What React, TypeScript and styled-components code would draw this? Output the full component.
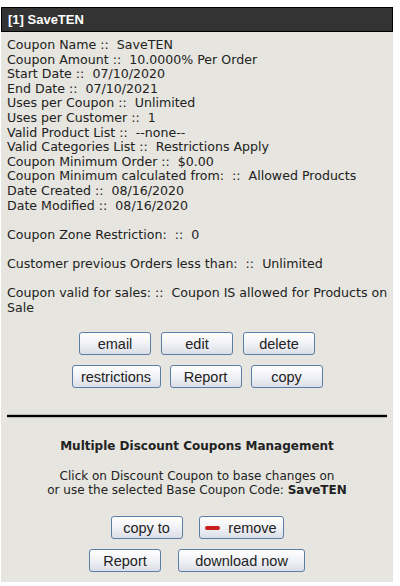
import React from "react";
import styled, { createGlobalStyle } from "styled-components";

const Global = createGlobalStyle`
  html, body { margin: 0; padding: 0; background: #ffffff; }
  body { font-family: "DejaVu Sans", Verdana, sans-serif; }
`;

const Panel = styled.div`
  margin: 7px 0 0 1px;
  width: 392px;
  background: #e6e5df;
  padding-bottom: 10px;
  box-sizing: border-box;
`;

const Header = styled.div`
  height: 25px;
  box-sizing: border-box;
  background: #333333;
  border: 1px solid #000;
  color: #fff;
  font-family: "Liberation Sans", Arial, sans-serif;
  font-weight: bold;
  font-size: 13px;
  display: flex;
  align-items: center;
  padding-left: 6px;
`;

const Info = styled.div`
  padding: 6px 2px 0 6px;
  font-size: 12.6px;
  line-height: 14.6px;
  color: #222;
`;

const Line = styled.div<{ $gap?: boolean }>`
  margin-top: ${(p) => (p.$gap ? "14.6px" : "0")};
`;

const ButtonRows = styled.div<{ $top: number }>`
  display: flex;
  flex-direction: column;
  align-items: center;
  gap: 10px;
  margin-top: ${(p) => p.$top}px;
`;

const Row = styled.div<{ $gap: number; $shift?: number }>`
  display: flex;
  gap: ${(p) => p.$gap}px;
  margin-left: ${(p) => p.$shift ?? 0}px;
`;

const Btn = styled.button<{ $w: number }>`
  width: ${(p) => p.$w}px;
  height: 23px;
  padding: 0 4px;
  box-sizing: border-box;
  border: 1px solid #5b7ea6;
  border-radius: 3px;
  background: linear-gradient(#ffffff 0%, #f1f2f6 50%, #dcdee8 100%);
  font-family: "Liberation Sans", Arial, sans-serif;
  font-size: 14.5px;
  color: #222;
  display: flex;
  align-items: center;
  justify-content: center;
  gap: 8px;
  cursor: pointer;
`;

const Minus = styled.span`
  display: inline-block;
  width: 15px;
  height: 4px;
  border-radius: 2px;
  background: #c81e1e;
`;

const Rule = styled.hr`
  margin: 27px 6px 0 6px;
  border: none;
  height: 2px;
  background: #000;
  box-shadow: 0 1px 0 #b8b8b4, 0 -1px 0 #b8b8b4;
`;

const Manage = styled.div`
  text-align: center;
  font-size: 12px;
  color: #222;
  line-height: 14.6px;
`;

const Title = styled.div`
  font-weight: bold;
  margin-top: 22px;
`;

const Note = styled.div`
  margin-top: 15px;
`;

export default function App() {
  const lines: [string, string, boolean?][] = [
    ["Coupon Name ::", "SaveTEN"],
    ["Coupon Amount ::", "10.0000% Per Order"],
    ["Start Date ::", "07/10/2020"],
    ["End Date ::", "07/10/2021"],
    ["Uses per Coupon ::", "Unlimited"],
    ["Uses per Customer ::", "1"],
    ["Valid Product List ::", "--none--"],
    ["Valid Categories List ::", "Restrictions Apply"],
    ["Coupon Minimum Order ::", "$0.00"],
    ["Coupon Minimum calculated from:  ::", "Allowed Products"],
    ["Date Created ::", "08/16/2020"],
    ["Date Modified ::", "08/16/2020"],
    ["Coupon Zone Restriction:  ::", "0", true],
    ["Customer previous Orders less than:  ::", "Unlimited", true],
    ["Coupon valid for sales: ::", "Coupon IS allowed for Products on Sale", true],
  ];
  return (
    <>
      <Global />
      <Panel>
        <Header>[1] SaveTEN</Header>
        <Info>
          {lines.map(([k, v, g], i) => (
            <Line key={i} $gap={g}>
              {k.replace(/  /g, "\u00a0 ")}
              {"\u00a0 "}
              {v}
            </Line>
          ))}
        </Info>
        <ButtonRows $top={17}>
          <Row $gap={10} $shift={0}>
            <Btn $w={72}>email</Btn>
            <Btn $w={72}>edit</Btn>
            <Btn $w={72}>delete</Btn>
          </Row>
          <Row $gap={9} $shift={0}>
            <Btn $w={89}>restrictions</Btn>
            <Btn $w={72}>Report</Btn>
            <Btn $w={72}>copy</Btn>
          </Row>
        </ButtonRows>
        <Rule />
        <Manage>
          <Title>Multiple Discount Coupons Management</Title>
          <Note>
            Click on Discount Coupon to base changes on
            <br />
            or use the selected Base Coupon Code: <b>SaveTEN</b>
          </Note>
        </Manage>
        <ButtonRows $top={18}>
          <Row $gap={16} $shift={0}>
            <Btn $w={72}>copy to</Btn>
            <Btn $w={85}>
              <Minus />
              remove
            </Btn>
          </Row>
          <Row $gap={17} $shift={0}>
            <Btn $w={72}>Report</Btn>
            <Btn $w={127}>download now</Btn>
          </Row>
        </ButtonRows>
      </Panel>
    </>
  );
}
